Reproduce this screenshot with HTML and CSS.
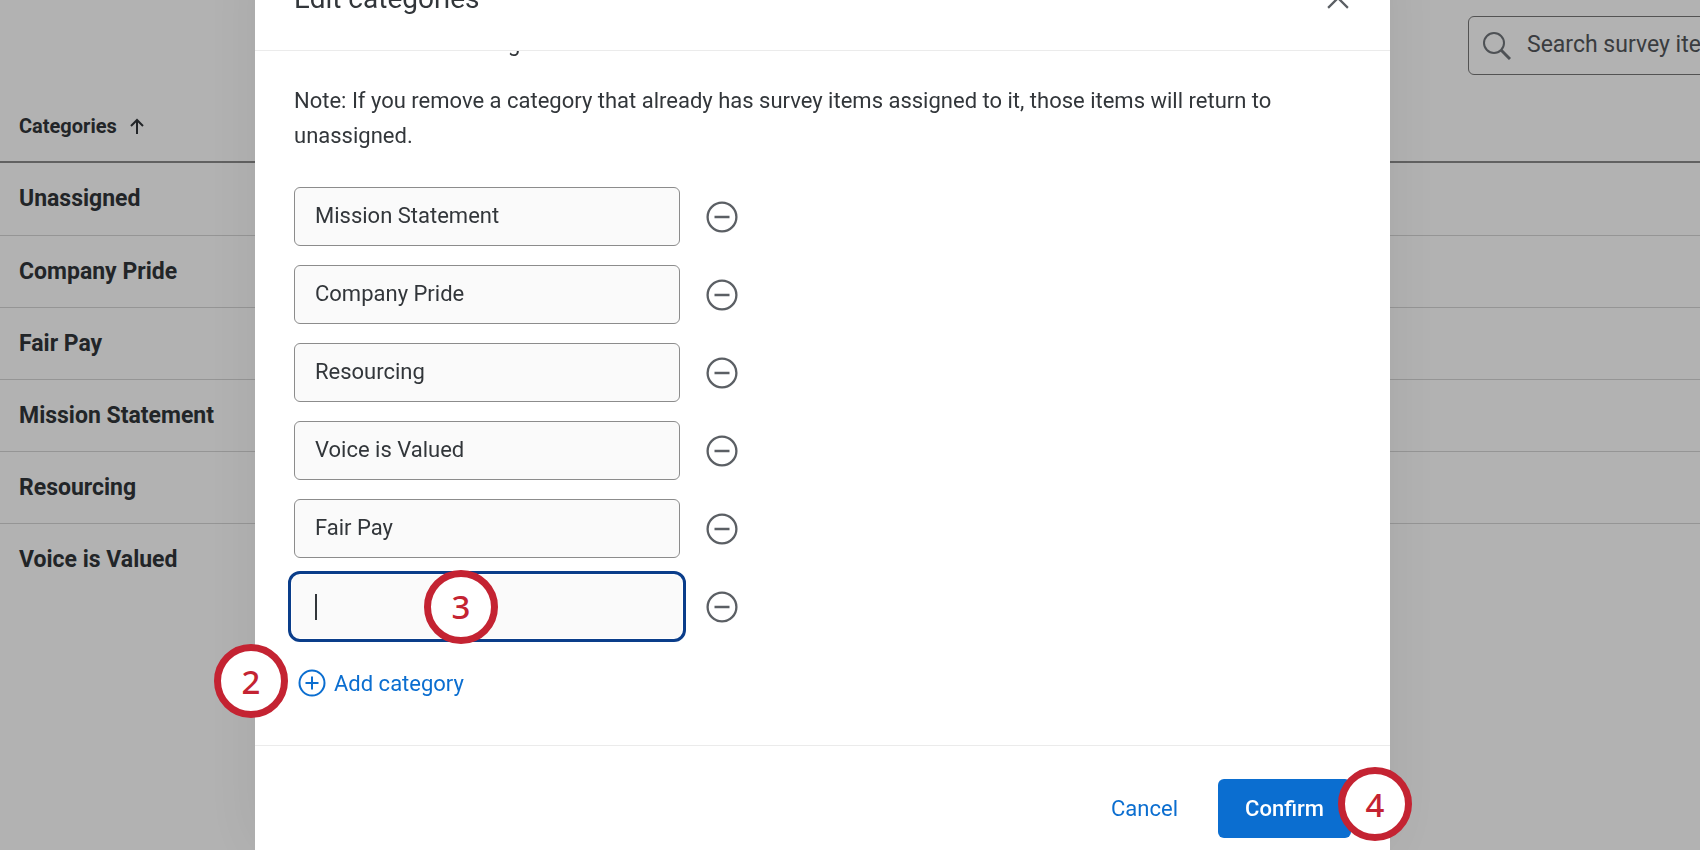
FILE: index.html
```html
<!DOCTYPE html>
<html lang="en">
<head>
  <meta charset="UTF-8" />
  <meta name="viewport" content="width=device-width, initial-scale=1" />
  <title>Edit categories</title>
  <link rel="stylesheet" href="styles.css">
</head>
<body>
  <svg class="sprite" aria-hidden="true">
    <symbol id="icon-minus" viewBox="0 0 32 32">
      <circle cx="16" cy="16" r="14.4" stroke-width="2.300" />
      <path d="M8.500 16h15" stroke-width="2.500" />
    </symbol>
  </svg>

  <main class="page">
    <div class="toolbar">
      <label class="search">
        <svg class="search-icon" viewBox="0 0 28 28" aria-hidden="true">
          <circle cx="11" cy="11" r="10" />
          <path d="M18 18l9 9" stroke-width="3" />
        </svg>
        <input type="text" placeholder="Search survey items" aria-label="Search survey items" />
      </label>
    </div>

    <table class="categories">
      <thead>
        <tr>
          <th>
            Categories
            <svg class="sort-icon" viewBox="0 0 14 16" aria-hidden="true"><path d="M7 16V2M1 8l6-6 6 6" /></svg>
          </th>
        </tr>
      </thead>
      <tbody>
        <tr><td>Unassigned</td></tr>
        <tr><td>Company Pride</td></tr>
        <tr><td>Fair Pay</td></tr>
        <tr><td>Mission Statement</td></tr>
        <tr><td>Resourcing</td></tr>
        <tr><td>Voice is Valued</td></tr>
      </tbody>
    </table>
  </main>

  <div class="overlay">
    <div class="modal" role="dialog" aria-labelledby="modalTitle">
      <div class="modal-header">
        <h1 id="modalTitle">Edit categories</h1>
        <button class="close" aria-label="Close">
          <svg viewBox="0 0 20 20" aria-hidden="true"><path d="M1 1l18 18M19 1L1 19" /></svg>
        </button>
      </div>

      <div class="modal-body">
        <div class="scrolled">
          <p>Add or edit these categories.</p>
          <p>Note: If you remove a category that already has survey items assigned to it, those items will return to unassigned.</p>

          <div class="fields">
            <div class="field">
              <input type="text" value="Mission Statement" aria-label="Category 1" />
              <button class="remove" aria-label="Remove Mission Statement"><svg><use href="#icon-minus" /></svg></button>
            </div>
            <div class="field">
              <input type="text" value="Company Pride" aria-label="Category 2" />
              <button class="remove" aria-label="Remove Company Pride"><svg><use href="#icon-minus" /></svg></button>
            </div>
            <div class="field">
              <input type="text" value="Resourcing" aria-label="Category 3" />
              <button class="remove" aria-label="Remove Resourcing"><svg><use href="#icon-minus" /></svg></button>
            </div>
            <div class="field">
              <input type="text" value="Voice is Valued" aria-label="Category 4" />
              <button class="remove" aria-label="Remove Voice is Valued"><svg><use href="#icon-minus" /></svg></button>
            </div>
            <div class="field">
              <input type="text" value="Fair Pay" aria-label="Category 5" />
              <button class="remove" aria-label="Remove Fair Pay"><svg><use href="#icon-minus" /></svg></button>
            </div>
            <div class="field field-active">
              <input type="text" aria-label="Category 6" />
              <span class="caret"></span>
              <span class="step step-3">3</span>
              <button class="remove" aria-label="Remove category 6"><svg><use href="#icon-minus" /></svg></button>
            </div>
          </div>

          <button class="add">
            <svg viewBox="0 0 28 28" aria-hidden="true">
              <circle cx="14" cy="14" r="12.500" />
              <path d="M14 7.500v13M7.500 14h13" />
            </svg>
            Add category
          </button>
        </div>
      </div>

      <div class="modal-footer">
        <button class="cancel">Cancel</button>
        <button class="confirm">Confirm</button>
        <span class="step step-4">4</span>
      </div>
      <span class="step step-2">2</span>
    </div>
  </div>
</body>
</html>
```

FILE: styles.css
```css
* {
  box-sizing: border-box;
}

body {
  margin: 0;
  min-height: 100vh;
  overflow: hidden;
  font-family: Roboto, "Liberation Sans", sans-serif;
  font-size: 22px;
  color: #32363a;
  background: #fff;
}

button,
input {
  font: inherit;
  color: inherit;
}

button {
  display: flex;
  align-items: center;
  padding: 0;
  border: none;
  background: none;
  cursor: pointer;
}

svg {
  display: block;
  fill: none;
  stroke: currentColor;
  stroke-width: 2;
}

.sprite {
  position: absolute;
  width: 0;
  height: 0;
}

/* page behind the dialog */
.page {
  overflow: hidden;
}

.toolbar {
  display: flex;
  justify-content: flex-end;
  padding-top: 16px;
}

.search {
  display: flex;
  align-items: center;
  gap: 16px;
  width: 340px;
  height: 59px;
  margin-right: -108px;
  padding-left: 14px;
  border: 1px solid #777;
  border-radius: 6px;
  font-size: 23px;
}

.search-icon {
  width: 28px;
  height: 28px;
  color: #70757a;
}

.search input {
  flex: 1;
  min-width: 0;
  padding: 0 0 2px;
  border: none;
  background: none;
}

.search input::placeholder {
  color: #53575b;
  opacity: 1;
}

.categories {
  width: 100%;
  border-collapse: collapse;
  text-align: left;
  font-size: 23px;
  font-weight: 700;
}

.categories th {
  height: 87px;
  padding: 16px 19px 0;
  border-bottom: 2px solid #8c8c8c;
  font-size: 20px;
}

.categories td {
  height: 72px;
  padding: 0 19px;
}

.categories tbody tr:first-child td {
  height: 73px;
}

.categories tr + tr td {
  border-top: 1px solid #d6d6d6;
}

.sort-icon {
  display: inline-block;
  width: 14px;
  height: 16px;
  margin-left: 8px;
  vertical-align: -1px;
}

/* dialog */
.overlay {
  position: fixed;
  inset: 0;
  padding: 0 310px 0 255px;
  background: rgba(0, 0, 0, 0.3);
}

.modal {
  position: relative;
  display: flex;
  flex-direction: column;
  height: calc(100% + 52px);
  margin-top: -52px;
  background: #fff;
  box-shadow: 0 0 60px rgba(0, 0, 0, 0.08);
}

.modal-header {
  display: flex;
  align-items: center;
  justify-content: space-between;
  height: 103px;
  padding: 0 41px 2px 39px;
  border-bottom: 1px solid #ebebeb;
}

.modal-header h1 {
  margin: 0;
  font-size: 28px;
  font-weight: 400;
}

.close svg {
  width: 22px;
  height: 22px;
  color: #5b5f64;
}

.modal-body {
  flex: 1;
  overflow: hidden;
  padding: 0 39px;
}

/* content is scrolled up a little under the header */
.scrolled {
  margin-top: -25px;
}

.scrolled p {
  margin: 0 0 22px;
  line-height: 35px;
}

.fields {
  display: flex;
  flex-direction: column;
  gap: 19px;
  margin-top: 34px;
}

.field {
  position: relative;
  display: flex;
  align-items: center;
  gap: 26px;
}

.field input {
  width: 386px;
  height: 59px;
  padding: 0 20px 2px;
  border: 1px solid #8c8c8c;
  border-radius: 6px;
  background: #fafafa;
}

.field-active input {
  border-color: transparent;
  outline: 3px solid #0a3d8a;
  outline-offset: 3px;
  box-shadow: 0 0 0 2px #fafafa;
}

.caret {
  position: absolute;
  left: 21px;
  width: 2px;
  height: 26px;
  background: #32363a;
}

.remove svg {
  width: 32px;
  height: 32px;
  color: #5b5f64;
}

.add {
  gap: 8px;
  margin-top: 33px;
  margin-left: 4px;
  color: #0b6ed0;
}

.add svg {
  width: 28px;
  height: 28px;
}

.modal-footer {
  position: relative;
  display: flex;
  justify-content: flex-end;
  gap: 40px;
  height: 105px;
  padding: 33px 39px 12px;
  border-top: 1px solid #ebebeb;
}

.cancel {
  color: #0b6ed0;
}

.confirm {
  justify-content: center;
  width: 133px;
  border-radius: 6px;
  font-weight: 500;
  color: #fff;
  background: #0b6ed0;
}

/* numbered callouts */
.step {
  position: absolute;
  display: flex;
  align-items: center;
  justify-content: center;
  width: 74px;
  height: 74px;
  border: 7px solid #c42332;
  border-radius: 50%;
  font-family: "Noto Sans", sans-serif;
  font-size: 33px;
  font-weight: 500;
  color: #c42332;
  background: #fff;
}

.step-2 {
  left: -41px;
  bottom: 132px;
}

.step-3 {
  left: 130px;
}

.step-4 {
  right: -22px;
  top: 21px;
}
```
